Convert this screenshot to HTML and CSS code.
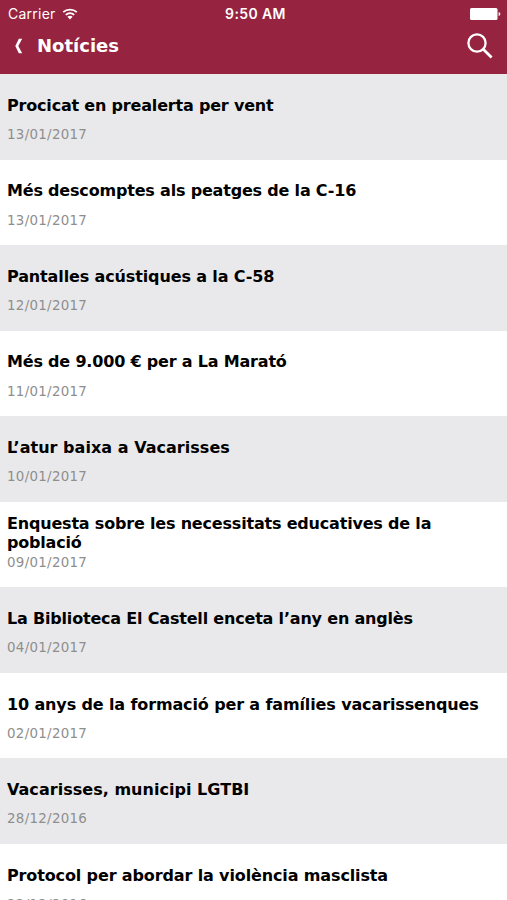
FILE: index.html
```
<!DOCTYPE html>
<html lang="ca">
<head>
	<meta charset="utf-8">
	<title>Notícies</title>
	<link rel="stylesheet" href="styles.css">
</head>
<body>
	<header class="header">
		<div class="status">
			<div class="carrier">
				<span>Carrier</span>
				<svg class="wifi" width="16" height="12" viewBox="0 0 16 12">
					<path d="M1.2 4.2C5 .7 11 .7 14.8 4.2M3.8 6.9C6.2 4.7 9.8 4.7 12.2 6.9" fill="none" stroke="#fff" stroke-width="1.8"/>
					<path d="M5.4 8.7C7 7.4 9 7.4 10.6 8.7L8 11.4Z" fill="#fff"/>
				</svg>
			</div>
			<div class="time">9:50 AM</div>
			<svg class="battery" width="31" height="12" viewBox="0 0 31 12">
				<rect width="27.5" height="12" rx="1.5" fill="#fff"/>
				<path d="M28.6 4Q30.4 4.3 30.4 6T28.6 8Z" fill="#fff"/>
			</svg>
		</div>
		<div class="navbar">
			<svg class="back" width="9" height="16" viewBox="0 0 9 16">
				<path d="M4.8 .8H8.2L4.3 8L8.2 15.2H4.8L1.3 8Z" fill="#fff"/>
			</svg>
			<h1>Notícies</h1>
			<svg class="search" width="26" height="26" viewBox="0 0 26 26">
				<circle cx="10" cy="10" r="8.6" fill="none" stroke="#fff" stroke-width="2.3"/>
				<path d="M16 16L24.6 24.6" stroke="#fff" stroke-width="2.8"/>
			</svg>
		</div>
	</header>

	<ul class="news">
		<li><div class="title"><h2>Procicat en prealerta per vent</h2></div><p class="date">13/01/2017</p></li>
		<li><div class="title"><h2>Més descomptes als peatges de la C-16</h2></div><p class="date">13/01/2017</p></li>
		<li><div class="title medium"><h2>Pantalles acústiques a la C-58</h2></div><p class="date">12/01/2017</p></li>
		<li><div class="title"><h2>Més de 9.000 € per a La Marató</h2></div><p class="date">11/01/2017</p></li>
		<li><div class="title wide"><h2>L’atur baixa a Vacarisses</h2></div><p class="date">10/01/2017</p></li>
		<li><div class="title"><h2>Enquesta sobre les necessitats educatives de la població</h2></div><p class="date">09/01/2017</p></li>
		<li><div class="title"><h2>La Biblioteca El Castell enceta l’any en anglès</h2></div><p class="date">04/01/2017</p></li>
		<li><div class="title medium"><h2>10 anys de la formació per a famílies vacarissenques</h2></div><p class="date">02/01/2017</p></li>
		<li><div class="title wide"><h2>Vacarisses, municipi LGTBI</h2></div><p class="date">28/12/2016</p></li>
		<li><div class="title medium"><h2>Protocol per abordar la violència masclista</h2></div><p class="date">22/12/2016</p></li>
	</ul>
</body>
</html>
```

FILE: styles.css
```
* {
	margin: 0;
	padding: 0;
	box-sizing: border-box;
}

body {
	height: 100vh;
	overflow: hidden;
	background-color: #fff;
	font-family: Verdana, "DejaVu Sans", sans-serif;
}

.header {
	height: 74px;
	background-color: #96233f;
	color: #fff;
}

.status {
	display: grid;
	grid-template-columns: 1fr auto 1fr;
	align-items: center;
	height: 27px;
	padding: 0 6px 0 8px;
	font-family: Inter, "Liberation Sans", sans-serif;
	font-size: 14px;
}

.carrier {
	display: flex;
	align-items: center;
	gap: 6px;
	letter-spacing: 0.25px;
}

.time {
	padding-left: 2px;
	font-weight: 600;
	letter-spacing: 0.4px;
}

.battery {
	justify-self: end;
}

.navbar {
	display: flex;
	align-items: center;
	height: 38px;
	padding: 0 14px 0 14px;
}

.navbar h1 {
	flex: 1;
	margin-left: 14px;
	font-size: 18px;
	line-height: 22px;
}

/* list */
.news {
	list-style: none;
}

.news li {
	height: 85.55px;
	padding: 12px 7px 0;
}

.news li:nth-child(odd) {
	background-color: #e9e9eb;
}

.title {
	display: flex;
	align-items: center;
	height: 39px;
	letter-spacing: -0.19px;
}

.title.medium {
	letter-spacing: -0.13px;
}

.title.wide {
	letter-spacing: 0.03px;
}

.title h2 {
	font-size: 16px;
	line-height: 19.5px;
	color: #000;
}

.date {
	padding-top: 1px;
	font-size: 13.4px;
	line-height: 18px;
	letter-spacing: 0.3px;
	color: #8e8e8e;
}
```
